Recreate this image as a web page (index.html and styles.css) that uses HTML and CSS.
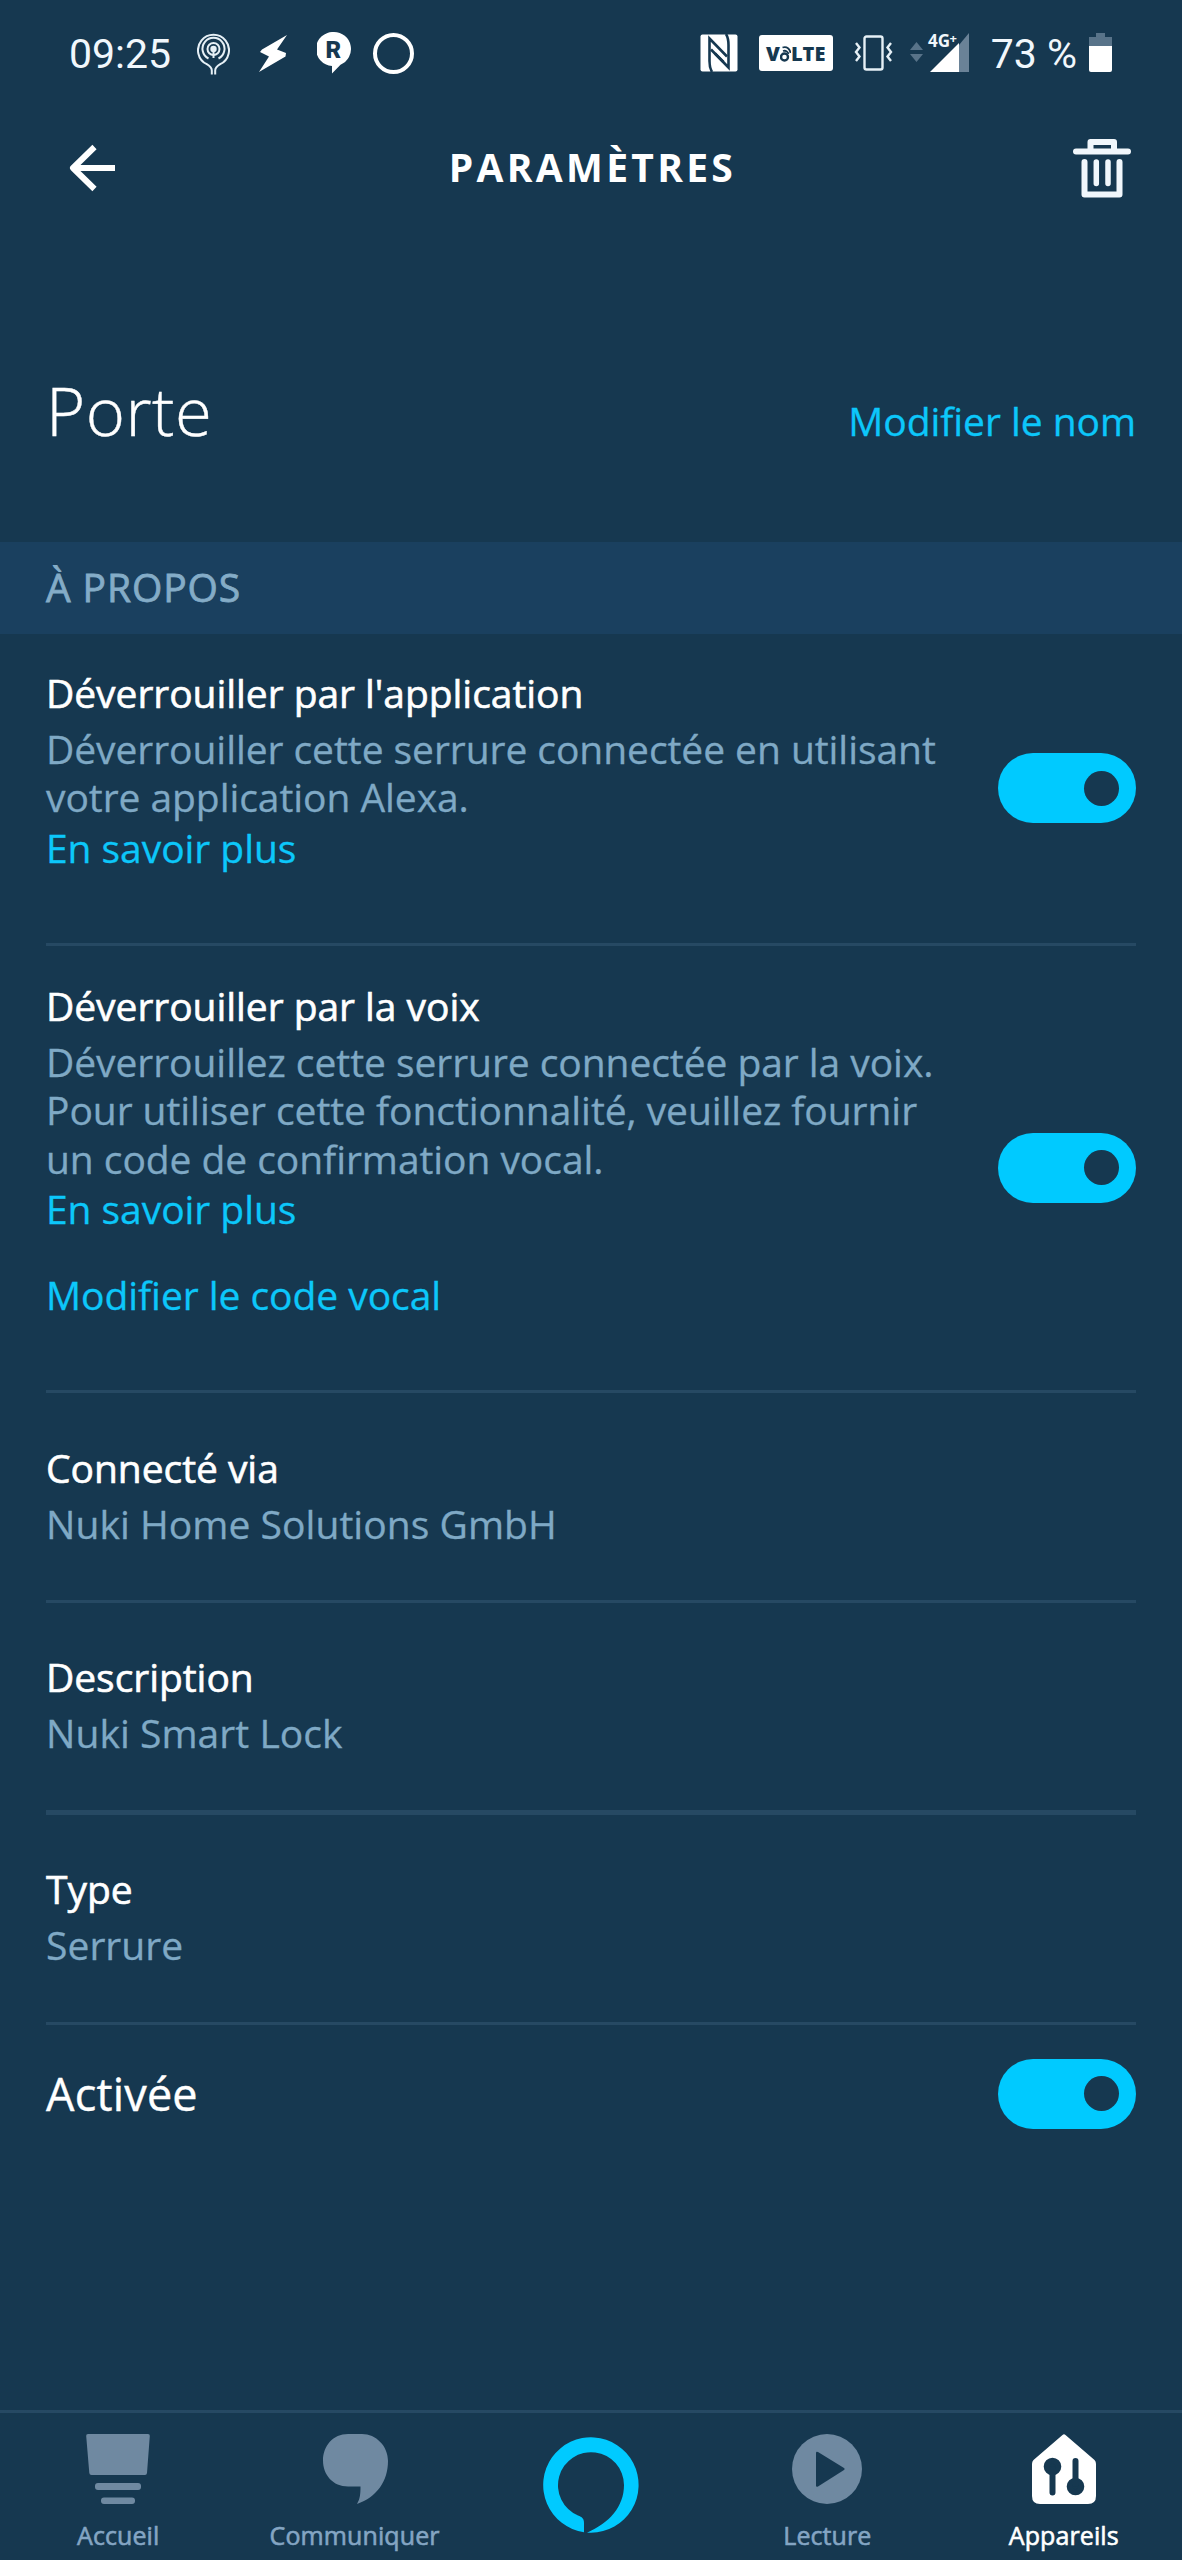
FILE: index.html
```html
<!DOCTYPE html>
<html lang="fr">
<head>
  <meta charset="UTF-8" />
  <meta name="viewport" content="width=device-width, initial-scale=1.0" />
  <title>Paramètres</title>
  <link rel="stylesheet" href="styles.css">
</head>
<body>
  <div class="status-bar">
    <span class="time">09:25</span>
    <div class="notifications">
      <svg width="33" height="43" viewBox="0 0 33 43" fill="none" stroke="#e6f0f6" stroke-width="2">
        <path d="M14.8 42.500v-4c0-3-2-4.500-5-6.300A15.500 15.500 0 1 1 23.200 32.200c-3 1.800-5 3.300-5 6.300v4" />
        <path d="M11.500 26.500a11 11 0 1 1 10 0" />
        <circle cx="16.500" cy="17" r="6" />
        <circle cx="16.500" cy="17" r="3.200" fill="#e6f0f6" stroke="none" />
        <path d="M16.500 19v7" />
      </svg>
      <svg width="31" height="39" viewBox="0 0 31 39" fill="#fff">
        <path d="M29 1 4 15.500 2 18l9 4.500L1 38l26.500-15.500L28 19l-9-3.500z" />
      </svg>
      <svg width="34" height="42" viewBox="0 0 34 42">
        <path d="M17 0a17 17 0 0 1 6.500 32.700L15 41.500V34A17 17 0 0 1 17 0z" fill="#fff" />
        <text x="8.500" y="25.500" class="badge-letter">R</text>
      </svg>
      <svg class="ring" width="41" height="41" viewBox="0 0 41 41">
        <circle cx="20.500" cy="20.500" r="18.500" fill="none" stroke="#fff" stroke-width="4" />
      </svg>
    </div>
    <div class="indicators">
      <svg width="38" height="38" viewBox="0 0 38 38">
        <rect x="0.500" y="0.500" width="37" height="37" rx="2" fill="#fff" />
        <g fill="none" stroke="#163850" stroke-width="2.600">
          <path d="M12 38C9.500 34 9.500 31 9.500 27V4.500L27 22.500" />
          <path d="M26 0c2.500 4 2.500 7 2.500 11v22.500L11 15.500" />
          <path d="M15 19.500 23.500 28" />
        </g>
      </svg>
      <span class="volte">V<svg width="11" height="17" viewBox="0 0 11 17" fill="none" stroke="#163850" stroke-width="1.800">
          <circle cx="4.500" cy="12" r="3.500" stroke-width="2.400" />
          <path d="M3 6c3-1 5 1 5.500 3M2.500 2.500C7 1 10 4 10.500 8" />
        </svg>LTE</span>
      <svg width="39" height="36" viewBox="0 0 39 36" fill="none" stroke="#e6f0f6" stroke-width="2.400">
        <rect x="10.500" y="1.500" width="18" height="33" rx="2" />
        <path d="M2 8l3.500 4.500L2 17l3.500 4.500L2 26M37 8l-3.500 4.500L37 17l-3.500 4.500L37 26" />
      </svg>
      <svg class="signal" width="60" height="60" viewBox="0 -10 60 60">
        <path d="M0 17 6.500 9 13 17zM0 21h13l-6.500 8z" fill="#587389" />
        <path d="M59 0v39H49V12z" fill="#6a8297" />
        <path d="M49 10v29H20z" fill="#fff" />
        <text x="18" y="13.500" class="network">4G</text>
        <text x="39.500" y="9.500" class="network-plus">+</text>
      </svg>
      <span class="battery-level">73 %</span>
      <svg class="battery" width="23" height="40" viewBox="0 0 23 40">
        <path d="M7 0h9v4h7v9H0V4h7z" fill="#587389" />
        <path d="M0 13h23v24q0 2-2 2H2q-2 0-2-2z" fill="#fff" />
      </svg>
    </div>
  </div>

  <header class="header">
    <svg width="47" height="48" viewBox="0 0 47 48" fill="none" stroke="#fff" stroke-width="6" stroke-linejoin="round">
      <path d="M25.500 3 4 24l21.500 21M4 24h42" />
    </svg>
    <h1>PARAMÈTRES</h1>
    <svg width="58" height="59" viewBox="0 0 58 59" fill="none" stroke="#f1f7fc" stroke-width="6" stroke-linecap="round" stroke-linejoin="round">
      <path d="M3 12.500h52M17.500 11V3h23.500v8" />
      <path d="M11.500 23v32.500h35V23" />
      <path d="M23.300 23v21.500M35 23v21.500" stroke-width="5.500" />
    </svg>
  </header>

  <section class="device">
    <h2>Porte</h2>
    <a class="link">Modifier le nom</a>
  </section>

  <div class="section-title">À PROPOS</div>

  <main class="settings">
    <div class="row">
      <div class="text">
        <h3>Déverrouiller par l'application</h3>
        <p>Déverrouiller cette serrure connectée en utilisant<br>votre application Alexa.</p>
        <a class="link more">En savoir plus</a>
      </div>
      <div class="toggle"></div>
    </div>
    <div class="row voice">
      <div class="text">
        <h3>Déverrouiller par la voix</h3>
        <p>Déverrouillez cette serrure connectée par la voix.<br>Pour utiliser cette fonctionnalité, veuillez fournir<br>un code de confirmation vocal.</p>
        <a class="link more">En savoir plus</a>
        <a class="link code">Modifier le code vocal</a>
      </div>
      <div class="toggle"></div>
    </div>
    <div class="row info">
      <div class="text">
        <h3>Connecté via</h3>
        <p>Nuki Home Solutions GmbH</p>
      </div>
    </div>
    <div class="row info thick">
      <div class="text">
        <h3>Description</h3>
        <p>Nuki Smart Lock</p>
      </div>
    </div>
    <div class="row info">
      <div class="text">
        <h3>Type</h3>
        <p>Serrure</p>
      </div>
    </div>
    <div class="row enabled">
      <span>Activée</span>
      <div class="toggle"></div>
    </div>
  </main>

  <nav class="tab-bar">
    <a class="tab">
      <svg width="70" height="70" viewBox="0 0 70 70" fill="#6f89a1">
        <path d="M5 0h60q2 0 1.800 2L64 39q-.2 2-2 2H8.500q-2 0-2.200-2L3.200 2Q3 0 5 0z" />
        <rect x="12" y="49" width="46" height="7" rx="3" />
        <rect x="18" y="63.500" width="34" height="6.500" rx="3" />
      </svg>
      <span>Accueil</span>
    </a>
    <a class="tab">
      <svg width="70" height="70" viewBox="0 0 70 70" fill="#6f89a1">
        <path d="M28 0h14c14 0 26 12 26 27 0 20-11 36-31 43 3-5 3.500-10 3.500-17.500H28C13 52.500 3 41 3 26.500S13 0 28 0z" />
      </svg>
      <span>Communiquer</span>
    </a>
    <a class="tab alexa">
      <svg width="96" height="96" viewBox="0 0 96 96" fill="#00caff">
        <path fill-rule="evenodd" d="M41 95.200A47.700 47.700 0 1 1 48 95.700H44C66 86 81 70 81 48A33 33 0 1 0 35 78.500C39 80 41 81.500 41 86z" />
      </svg>
    </a>
    <a class="tab">
      <svg width="70" height="70" viewBox="0 0 70 70">
        <circle cx="35" cy="35" r="35" fill="#6f89a1" />
        <path d="M24 19q0-2 2-1l26 16q1.500 1 0 2L26 52.500q-2 1-2-1z" fill="#163850" />
      </svg>
      <span>Lecture</span>
    </a>
    <a class="tab active">
      <svg width="70" height="70" viewBox="0 0 70 70">
        <path d="M33.500 1q1.500-1.500 3 0l29 25q1.500 1.500 1.500 4v32q0 8-8 8H11q-8 0-8-8V30q0-2.500 1.500-4z" fill="#fff" />
        <g fill="#163850" stroke="#163850" stroke-width="6" stroke-linecap="round">
          <circle cx="23.500" cy="32.500" r="5.800" />
          <circle cx="46.500" cy="52.500" r="5.800" />
          <path d="M23.500 35v23.500M46.500 27v23" />
        </g>
      </svg>
      <span>Appareils</span>
    </a>
  </nav>
</body>
</html>
```

FILE: styles.css
```css
* {
  box-sizing: border-box;
}
body {
  margin: 0;
  background-color: #163850;
  display: flex;
  flex-direction: column;
  height: 2560px;
  font-family: "Open Sans", "Noto Sans", sans-serif;
  font-size: 39px;
  line-height: 48px;
  color: #fff;
}
h1, h2, h3, p {
  margin: 0;
}
svg {
  display: block;
  flex: none;
}

/* status bar */
.status-bar {
  display: flex;
  align-items: center;
  height: 106px;
  padding: 0 70px 0 69px;
  font-family: Roboto, sans-serif;
  font-size: 41px;
}
.time {
  width: 128px;
  padding-top: 2px;
  color: #f1f7fc;
}
.notifications {
  display: flex;
  align-items: center;
  gap: 28px;
}
.notifications .ring {
  margin-left: -6px;
}
.badge-letter {
  font: 900 24px Roboto, sans-serif;
  fill: #163850;
}
.indicators {
  display: flex;
  align-items: center;
  gap: 21px;
  margin-left: auto;
}
.volte {
  display: flex;
  align-items: center;
  justify-content: center;
  width: 74px;
  height: 36px;
  background: #fff;
  border-radius: 3px;
  color: #163850;
  font: 800 20px "Open Sans", sans-serif;
}
.signal {
  margin-left: -4px;
}
.network {
  font: 700 17px "Open Sans", sans-serif;
  fill: #f1f7fc;
}
.network-plus {
  font: 700 13px "Open Sans", sans-serif;
  fill: #f1f7fc;
}
.battery-level {
  padding-top: 2px;
  color: #f1f7fc;
  white-space: nowrap;
}
.battery {
  margin-left: -9px;
}

/* header */
.header {
  display: flex;
  align-items: center;
  justify-content: space-between;
  height: 124px;
  padding: 0 51px 0 69px;
}
.header h1 {
  margin: 0 4px 2px 0;
  font-size: 39px;
  font-weight: 700;
  letter-spacing: 3.3px;
}

.device {
  display: flex;
  align-items: baseline;
  justify-content: space-between;
  height: 312px;
  padding: 135px 46px 0;
}
.device h2 {
  font-size: 67px;
  font-weight: 300;
  line-height: 90px;
  letter-spacing: 0.5px;
  -webkit-text-stroke: 0.4px;
}
.link {
  color: #0cc7fa;
  letter-spacing: -0.05px;
  -webkit-text-stroke: 0.3px;
}

.section-title {
  height: 92px;
  padding-left: 46px;
  line-height: 89px;
  background: #1a405f;
  color: #84acc7;
  letter-spacing: 0.9px;
  -webkit-text-stroke: 0.8px;
}

/* settings list */
.settings {
  padding: 0 46px;
}
.row {
  display: flex;
  align-items: center;
  justify-content: space-between;
  border-bottom: 3px solid #264963;
}
.text {
  padding: 35px 0 71px;
}
.voice .text {
  padding-top: 36px;
}
.row h3 {
  font-size: 39px;
  font-weight: 400;
  letter-spacing: -0.05px;
  -webkit-text-stroke: 0.6px;
}
.row p {
  margin-top: 8px;
  line-height: 48.4px;
  color: #7fa9c5;
  letter-spacing: -0.06px;
  white-space: nowrap;
  -webkit-text-stroke: 0.3px;
}
.more, .code {
  display: block;
}
.more {
  margin-top: 2px;
}
.code {
  margin-top: 38px;
}
.info .text {
  padding: 50.5px 0 52px;
}
.info p {
  letter-spacing: 0.05px;
}
.thick {
  border-bottom-width: 5px;
}
.enabled {
  height: 138px;
  border-bottom: none;
  font-size: 45px;
  letter-spacing: 0.2px;
  -webkit-text-stroke: 0.4px;
}
.toggle {
  display: flex;
  align-items: center;
  justify-content: flex-end;
  width: 138px;
  height: 70px;
  padding-right: 17px;
  border-radius: 35px;
  background: #00caff;
}
.toggle::after {
  content: "";
  width: 35px;
  height: 35px;
  border-radius: 50%;
  background: #163850;
}

/* bottom tabs */
.tab-bar {
  display: grid;
  grid-template-columns: repeat(5, 1fr);
  height: 150px;
  margin-top: auto;
  padding-top: 21px;
  border-top: 3px solid #264963;
}
.tab {
  display: flex;
  flex-direction: column;
  align-items: center;
  gap: 16px;
  font-size: 25px;
  letter-spacing: 0.1px;
  line-height: 30px;
  color: #84a5c3;
  -webkit-text-stroke: 0.6px;
}
.tab.active {
  color: #fff;
}
.alexa {
  padding-top: 3px;
}
```
